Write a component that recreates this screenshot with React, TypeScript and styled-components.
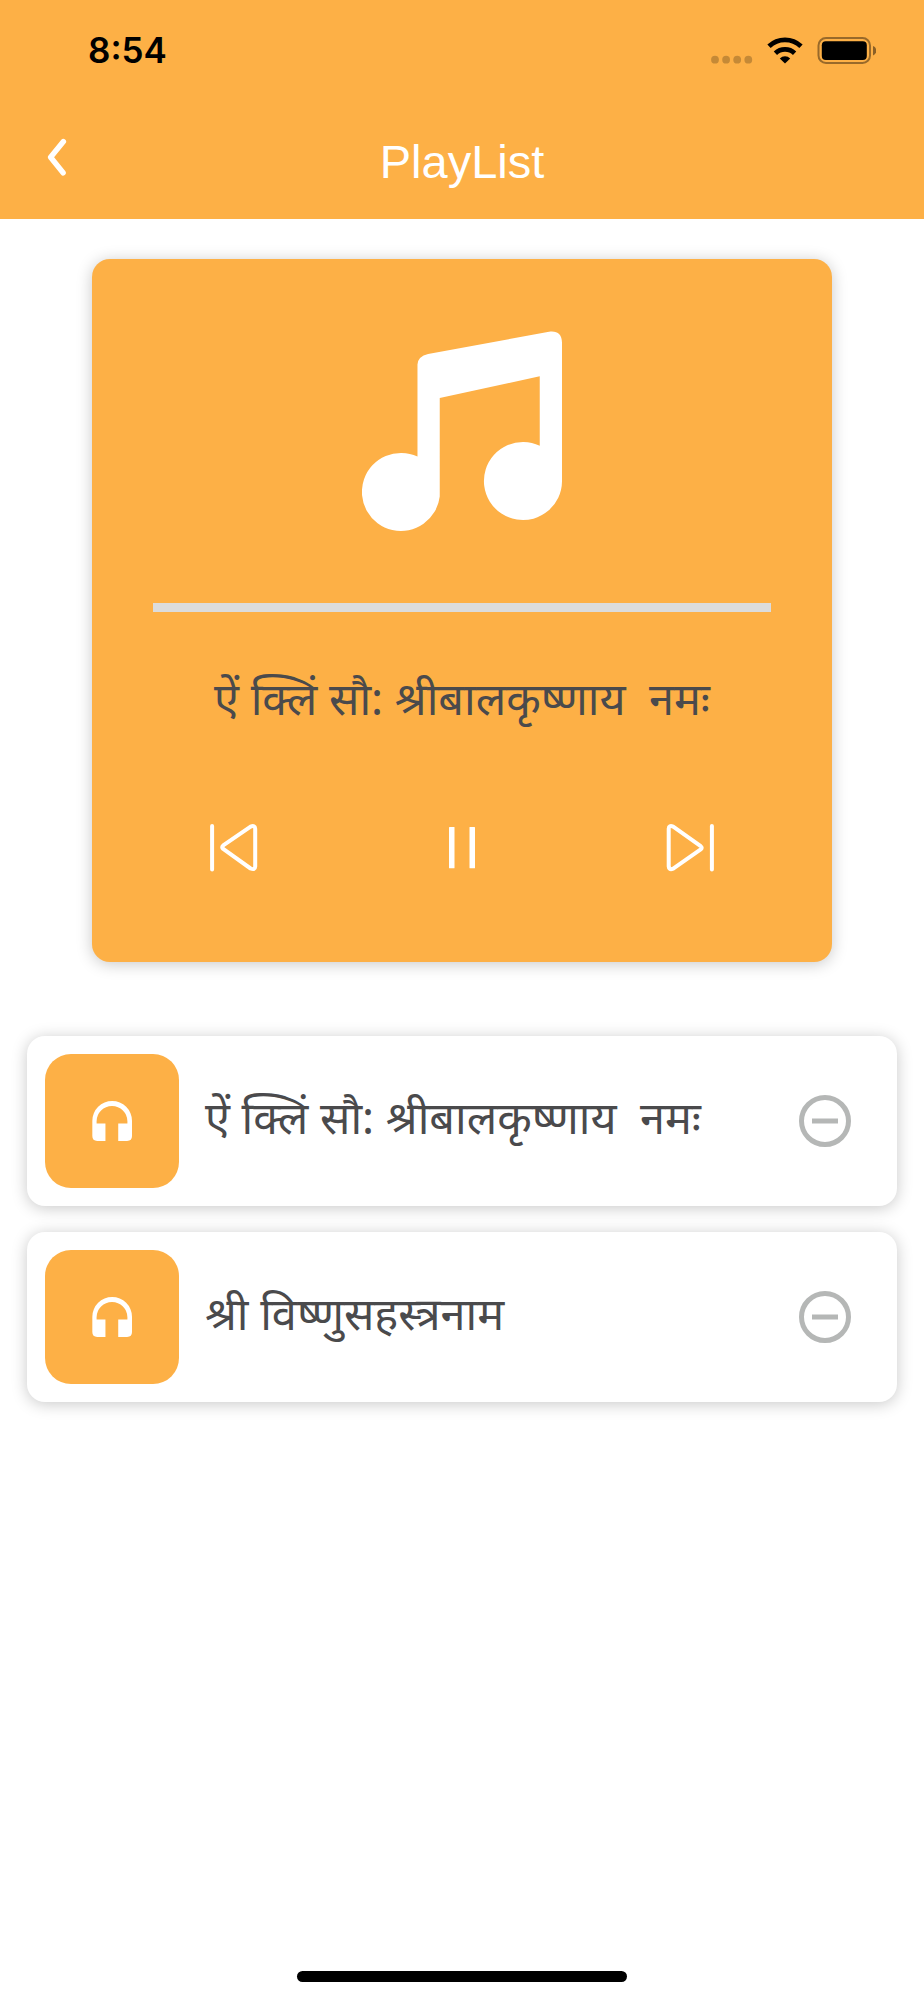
import React from "react";
import styled, { createGlobalStyle } from "styled-components";

const ORANGE = "#fdb046";
const INK = "#4a4a4c";
const LATIN = `Inter, "Liberation Sans", sans-serif`;
const DEVANAGARI = `"Noto Sans", "Noto Sans Devanagari", sans-serif`;
const SHADOW = "0 2px 16px rgba(0, 0, 0, 0.22)";

const GlobalStyle = createGlobalStyle`
  * { box-sizing: border-box; }
  body { margin: 0; background: #fff; }
  button { appearance: none; border: 0; padding: 0; background: none; cursor: pointer; }
  svg { display: block; }
`;

const Screen = styled.div`
  min-height: 100vh;
  display: flex;
  flex-direction: column;
  background: #fff;
  font-family: ${LATIN};
`;

const Header = styled.header`
  background: ${ORANGE};
`;

const StatusBar = styled.div`
  height: 100px;
  padding: 0 48px 0 88px;
  display: flex;
  align-items: center;
  justify-content: space-between;
`;

const Clock = styled.time`
  font-size: 35px;
  line-height: 40px;
  font-weight: 600;
  color: #000;
`;

const StatusIcons = styled.div`
  display: flex;
  align-items: center;
  gap: 14px;
`;

const NavBar = styled.nav`
  height: 119px;
  padding: 4px 32px 0;
  display: grid;
  grid-template-columns: 48px 1fr 48px;
  align-items: center;
`;

const IconButton = styled.button<{ $size: number }>`
  width: ${(p) => p.$size}px;
  height: ${(p) => p.$size}px;
`;

const PageTitle = styled.h1`
  margin: 0;
  text-align: center;
  font-family: "Liberation Sans", sans-serif;
  font-size: 47px;
  line-height: 56px;
  font-weight: 400;
  color: #fff;
`;

const Main = styled.main`
  flex: 1;
  display: flex;
  flex-direction: column;
  align-items: center;
  gap: 74px;
  padding: 40px 27px;
`;

const PlayerCard = styled.section`
  width: 85%;
  padding: 72px 28px 90px;
  display: flex;
  flex-direction: column;
  align-items: center;
  background: ${ORANGE};
  border-radius: 18px;
  box-shadow: ${SHADOW};
`;

const Progress = styled.progress`
  appearance: none;
  display: block;
  width: calc(100% - 66px);
  height: 9px;
  margin: 72px 0 60px;
  border: 0;
  background: #dcdcdc;
  &::-webkit-progress-bar { background: #dcdcdc; }
  &::-webkit-progress-value { background: #fff; }
`;

const TrackTitle = styled.span`
  padding-bottom: 8px;
  font-family: ${DEVANAGARI};
  font-size: 45px;
  line-height: 52px;
  color: ${INK};
  white-space: pre-wrap;
`;

const Controls = styled.div`
  width: 100%;
  margin-top: 92px;
  display: grid;
  grid-template-columns: repeat(3, 1fr);
  justify-items: center;
`;

const TrackList = styled.ul`
  width: 100%;
  margin: 0;
  padding: 0;
  list-style: none;
  display: flex;
  flex-direction: column;
  gap: 26px;
`;

const TrackRow = styled.li`
  padding: 18px 46px 18px 18px;
  display: flex;
  align-items: center;
  gap: 26px;
  background: #fff;
  border-radius: 18px;
  box-shadow: ${SHADOW};
`;

const Tile = styled.div`
  width: 134px;
  height: 134px;
  flex: none;
  display: flex;
  align-items: center;
  justify-content: center;
  background: ${ORANGE};
  border-radius: 26px;
`;

const TrackName = styled(TrackTitle)`
  flex: 1;
`;

const HomeIndicator = styled.div`
  width: 330px;
  height: 11px;
  margin: 0 auto 18px;
  border-radius: 6px;
  background: #000;
`;

const tracks = ["ऐं क्लिं सौ: श्रीबालकृष्णाय  नमः", "श्री विष्णुसहस्त्रनाम"];

const SignalDots = () => (
  <svg width="42" height="27" viewBox="0 0 42 27" fill="#000" fillOpacity="0.22">
    {[4, 15.1, 26.2, 37.3].map((x) => (
      <circle key={x} cx={x} cy="22.700" r="3.900" />
    ))}
  </svg>
);

const Wifi = () => (
  <svg width="36" height="27" viewBox="0 0 36 27">
    <g fill="none" stroke="#000" strokeWidth="4.800">
      <path d="M2 9.200a23.200 23.200 0 0 1 32 0" />
      <path d="M8.400 16.200a14 14 0 0 1 19.200 0" />
    </g>
    <path d="M18 26.600 12.800 21.400a7.600 7.600 0 0 1 10.400 0Z" />
  </svg>
);

const Battery = () => (
  <svg width="59" height="27" viewBox="0 0 59 27">
    <rect x="1.500" y="1" width="51.500" height="25" rx="7.500" fill="none" stroke="#000" strokeOpacity="0.4" strokeWidth="2" />
    <rect x="4.800" y="4.300" width="45" height="18.600" rx="4" />
    <path d="M56 9a5 5 0 0 1 0 9.400Z" fillOpacity="0.45" />
  </svg>
);

const Chevron = () => (
  <svg width="48" height="48" viewBox="0 0 48 48" fill="none" stroke="#fff" strokeWidth="5.400" strokeLinecap="round" strokeLinejoin="round">
    <path d="M31.400 3.500 18.600 19.200 31.100 34.800" />
  </svg>
);

const MusicNotes = () => (
  <svg width="200" height="200" viewBox="65 62 602 602" fill="#fff">
    <path d="M232 163Q233 138 264 131L632 63.500Q666 61 667 97V515A117.500 117.500 0 1 1 600 407.500V198L299 264V560A117.500 117.500 0 1 1 232 440Z" />
  </svg>
);

const Previous = () => (
  <svg width="48" height="48" viewBox="0 0 48 48" fill="none" stroke="#fff" strokeWidth="4" strokeLinecap="round" strokeLinejoin="round">
    <path d="M2.100 2V45.400M40.600 2.600 13.200 21.400Q11.200 23.100 13.200 24.900L40.600 44.500Q45 46.400 45.200 42.400V4.800Q45 .7 40.600 2.600Z" />
  </svg>
);

const Pause = () => (
  <svg width="48" height="48" viewBox="0 0 48 48" fill="#fff">
    <rect x="11" y="3" width="5.500" height="41.300" rx="0.500" />
    <rect x="31.500" y="3" width="5.500" height="41.300" rx="0.500" />
  </svg>
);

const Next = () => (
  <svg width="48" height="48" viewBox="0 0 48 48" fill="none" stroke="#fff" strokeWidth="4" strokeLinecap="round" strokeLinejoin="round">
    <path d="M45.900 2V45.400M7.200 2.600 34.700 22.200Q36.700 23.800 34.700 25.400L7.200 44.700Q2.800 46.400 2.700 42.400V4.800Q2.800 .9 7.200 2.600Z" />
  </svg>
);

const Headphones = () => (
  <svg width="40" height="40" viewBox="244 240 122 122" fill="#fff">
    <path d="M245 300A60.500 60 0 0 1 366 300V347Q366 362 351 362H324V309H352V302A47 47 0 0 0 258 302V309H285V362H260Q245 362 245 347Z" />
  </svg>
);

const Minus = () => (
  <svg width="52" height="52" viewBox="0 0 52 52" fill="none" stroke="#b5b7b6" strokeWidth="5">
    <circle cx="26" cy="26" r="23.500" />
    <path d="M13 26H39" />
  </svg>
);

export default function App() {
  return (
    <Screen>
      <GlobalStyle />
      <Header>
        <StatusBar>
          <Clock>8:54</Clock>
          <StatusIcons>
            <SignalDots />
            <Wifi />
            <Battery />
          </StatusIcons>
        </StatusBar>
        <NavBar>
          <IconButton $size={48} aria-label="Back">
            <Chevron />
          </IconButton>
          <PageTitle>PlayList</PageTitle>
        </NavBar>
      </Header>
      <Main>
        <PlayerCard>
          <MusicNotes />
          <Progress value={0} max={100} aria-label="Playback position" />
          <TrackTitle lang="hi">{tracks[0]}</TrackTitle>
          <Controls>
            <IconButton $size={48} aria-label="Previous">
              <Previous />
            </IconButton>
            <IconButton $size={48} aria-label="Pause">
              <Pause />
            </IconButton>
            <IconButton $size={48} aria-label="Next">
              <Next />
            </IconButton>
          </Controls>
        </PlayerCard>
        <TrackList>
          {tracks.map((name) => (
            <TrackRow key={name}>
              <Tile>
                <Headphones />
              </Tile>
              <TrackName lang="hi">{name}</TrackName>
              <IconButton $size={52} aria-label={`Remove ${name}`}>
                <Minus />
              </IconButton>
            </TrackRow>
          ))}
        </TrackList>
      </Main>
      <HomeIndicator />
    </Screen>
  );
}
